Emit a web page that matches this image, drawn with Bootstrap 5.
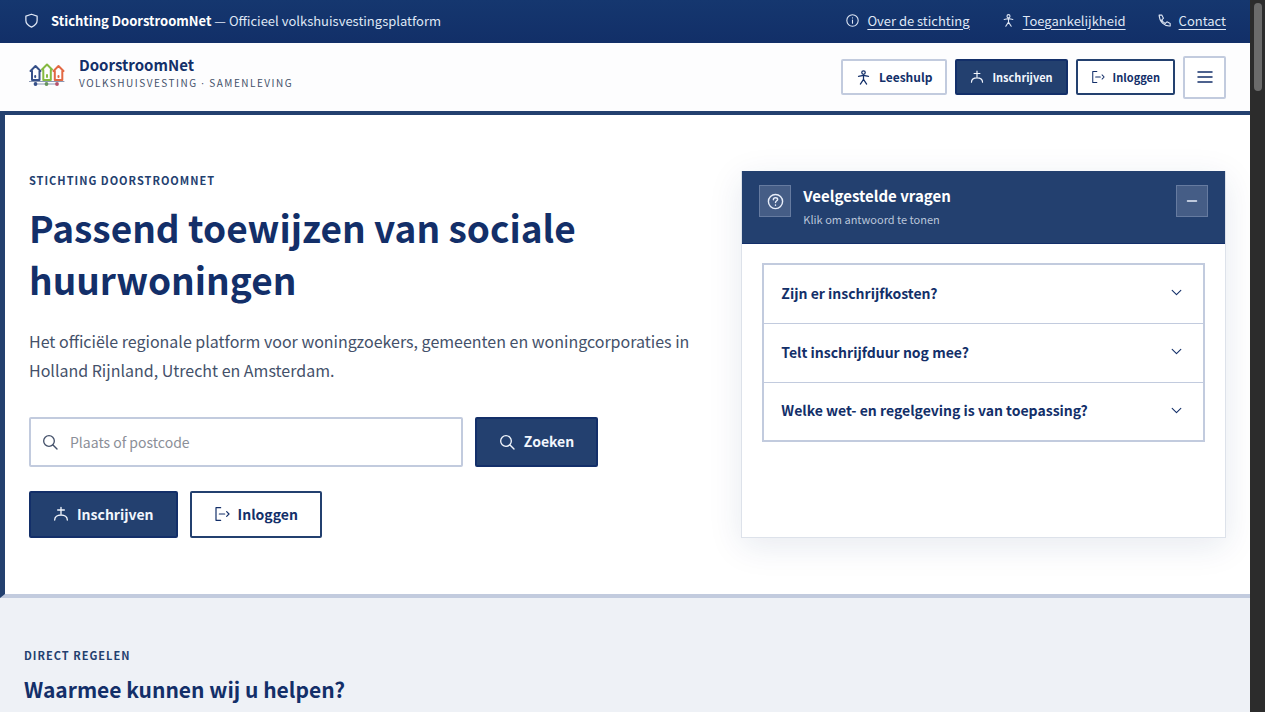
<!DOCTYPE html>
<html lang="nl">
<head>
<meta charset="utf-8">
<meta name="viewport" content="width=device-width, initial-scale=1">
<title>Stichting DoorstroomNet</title>
<link href="https://cdn.jsdelivr.net/npm/bootstrap@5.3.0/dist/css/bootstrap.min.css" rel="stylesheet">
<style>
:root { --navy: #132f69; --blue: #23406f; --line: #c2cbde; --muted: #44516a; }
body { font-family: "Noto Sans CJK SC", "Open Sans", sans-serif; font-size: 14px; line-height: 20px; color: var(--muted); background: #eef1f6; }
svg { flex: none; fill: none; stroke: currentColor; stroke-width: 2; stroke-linecap: round; stroke-linejoin: round; }
.shell { min-width: 0; }
.scroll-rail { width: 15px; height: 100vh; background: #2c2c2c; padding: 3px 3px 0 4px; }
.scroll-thumb { height: 88px; border-radius: 4px; background: #6b6b6b; }

.topbar { background: linear-gradient(#15376f, #122f68); color: #dfe7f5; font-size: 13px; height: 43px; padding: 0 24px 2px; }
.topbar a { color: #dfe7f5; text-underline-offset: 3px; }
.topbar strong { color: #fff; }
.topbar-links { gap: 32px; }
.masthead { background: #fdfdfe; border-bottom: 4px solid var(--blue); height: 72px; padding: 0 24px 0 29px; }
.brand { margin-bottom: 4px; }
.brand-text { margin: 0 0 4px 14px; }
.brand-name { font-size: 15px; line-height: 20px; font-weight: 700; color: var(--navy); }
.brand-sub { font-size: 10px; line-height: 16px; letter-spacing: 1.5px; color: var(--muted); }
.brand-sub span { font-family: "Open Sans", sans-serif; }

.btn { --bs-btn-border-radius: 2px; --bs-btn-border-width: 2px; --bs-btn-font-weight: 600; display: inline-flex; align-items: center; justify-content: center; gap: 8px; white-space: nowrap; }
.btn-navy { --bs-btn-color: #f2f6fd; --bs-btn-bg: var(--blue); --bs-btn-border-color: var(--navy); --bs-btn-hover-color: #fff; --bs-btn-hover-bg: var(--navy); }
.btn-line { --bs-btn-color: var(--navy); --bs-btn-bg: #fff; --bs-btn-border-color: var(--blue); --bs-btn-hover-color: #fff; --bs-btn-hover-bg: var(--blue); }
.btn-soft { --bs-btn-color: var(--navy); --bs-btn-bg: #fff; --bs-btn-border-color: var(--line); --bs-btn-hover-bg: #eef1f6; }
.btn-head { height: 36px; padding: 0 13px; font-size: 11px; line-height: 16px; }
.btn-help { font-size: 12px; }
.btn-menu { width: 43px; height: 43px; padding: 0; }
.btn-main { height: 47px; padding: 0 22px 1px; font-size: 14px; }

.hero { background: #fff; border-left: 5px solid var(--blue); border-bottom: 4px solid var(--line); padding: 56px 24px; }
.hero-grid { display: grid; grid-template-columns: 11fr 8fr; gap: 46px; }
.eyebrow { font-size: 11px; line-height: 18px; font-weight: 700; letter-spacing: 1px; color: var(--blue); margin: 0; }
.hero h1 { font-size: 37px; line-height: 52px; font-weight: 700; color: var(--navy); margin: 12px 0 22px; }
.intro { font-size: 16px; line-height: 29px; margin: 0 0 32px; }
.search { max-width: 569px; gap: 12px; margin-bottom: 24px; }
.search-icon { left: 13px; top: 17px; color: #44516a; }
.search .form-control { height: 50px; border: 2px solid var(--line); border-radius: 2px; padding: 0 12px 1px 39px; font-size: 14px; }
.search .form-control::placeholder { color: #8b8f98; }
.search .btn { height: 50px; width: 123px; padding: 0 0 1px; gap: 9px; }

.faq { border: 1px solid #dde2ea; border-top: 0; box-shadow: 0 8px 32px rgba(19, 47, 105, .1); background: #fff; }
.faq-head { background: var(--blue); border-bottom: 1px solid var(--navy); color: #fff; padding: 14px 17px 12px; gap: 12px; }
.faq-head h2 { font-size: 15px; line-height: 22px; font-weight: 700; margin: 0; }
.faq-head p { font-size: 11px; line-height: 24px; color: #bac6da; margin: 0; }
.square { width: 32px; height: 32px; background: #455d86; border: 1px solid #667ba0; color: #e8eefa; padding: 0; display: flex; align-items: center; justify-content: center; }
.faq-list { border: 2px solid var(--line); margin: 19px 20px; }
.faq-item { width: 100%; height: 59px; border: 0; border-bottom: 1px solid var(--line); background: #fff; color: var(--navy); font-size: 14px; font-weight: 600; text-align: left; padding: 0 20px 3px 17px; }
.faq-item:last-child { border-bottom: 0; height: 57px; }
.help { padding: 48px 24px 0; height: 114px; }
.help h2 { font-size: 21px; line-height: 32px; font-weight: 700; color: var(--navy); margin: 9px 0 0; }
</style>
</head>
<body>
<svg class="d-none" aria-hidden="true">
  <symbol id="person" viewBox="0 0 24 24"><circle cx="12" cy="4" r="2.800"/><path d="M4 10c3 0 5-1.500 8-1.500s5 1.500 8 1.500M12 8.500v6.500M12 15l-5 7.500M12 15l5 7.500"/></symbol>
  <symbol id="enrol" viewBox="0 0 24 24"><path d="M12 2v10M7 6h10M2.500 21c0-4.500 4-7.500 9.500-7.500s9.500 3 9.500 7.500"/></symbol>
  <symbol id="login" viewBox="0 0 24 24"><g stroke-width="1.800"><path d="M10 2.500H3v19h7M8 12h8M19 8.500l3.500 3.500-3.500 3.500"/></g></symbol>
  <symbol id="search" viewBox="0 0 24 24"><circle cx="10.500" cy="10.500" r="8"/><path d="M16.500 16.500l6 6"/></symbol>
  <symbol id="chevron" viewBox="0 0 24 24"><path d="M4 8l8 8 8-8"/></symbol>
</svg>
<div class="d-flex vh-100 overflow-hidden">
<div class="shell flex-grow-1">
  <div class="topbar d-flex align-items-center justify-content-between">
    <div class="d-flex align-items-center">
      <svg width="15" height="15" viewBox="0 0 24 24"><path d="M12 2l9 3v7c0 5-3.500 8-9 10.500C6.500 20 3 17 3 12V5z"/></svg>
      <span class="ms-2 ps-1"><strong>Stichting DoorstroomNet</strong> — Officieel volkshuisvestingsplatform</span>
    </div>
    <nav class="topbar-links d-flex">
      <div class="d-flex align-items-center gap-2"><svg width="13" height="13" viewBox="0 0 24 24"><circle cx="12" cy="12" r="10.500"/><path d="M12 11v6M12 7v.200"/></svg><a href="#stichting">Over de stichting</a></div>
      <div class="d-flex align-items-center gap-2"><svg width="13" height="13"><use href="#person"/></svg><a href="#toegankelijkheid">Toegankelijkheid</a></div>
      <div class="d-flex align-items-center gap-2"><svg width="13" height="13" viewBox="0 0 24 24"><path d="M2 2h5l3 6-3 3c1.500 3 3.500 5 6.500 6.500l3-3 6 3V22c-11 1-20-8-20.500-20z"/></svg><a href="#contact">Contact</a></div>
    </nav>
  </div>
  <header class="masthead d-flex align-items-center justify-content-between">
    <div class="brand d-flex align-items-center">
      <svg width="36" height="24" viewBox="0 0 36 24">
        <g stroke-width="2"><path stroke="#354f88" d="M1.500 8l5-5 5 5M3 8v9h7.500V8M6.200 13v1"/><path stroke="#85b940" d="M13 6.500l5-5 5 5M14.300 7v10h7.500V7M18 12v2"/><path stroke="#e26843" d="M24.500 8l5-5 5 5M25.800 8v9h7.500V8M29.500 13v1"/></g>
        <path stroke="#8b98b4" stroke-width="1" d="M0 18.500h35M7 21h21"/>
        <g stroke="none"><circle cx="6.500" cy="21" r="1.900" fill="#354f88"/><circle cx="17.500" cy="21" r="1.900" fill="#65935d"/><circle cx="28" cy="21" r="1.900" fill="#b5506b"/></g>
      </svg>
      <div class="brand-text">
        <div class="brand-name">DoorstroomNet</div>
        <div class="brand-sub">VOLKSHUISVESTING <span>·</span> SAMENLEVING</div>
      </div>
    </div>
    <div class="d-flex align-items-center gap-2">
      <button type="button" class="btn btn-soft btn-head btn-help"><svg width="15" height="15"><use href="#person"/></svg>Leeshulp</button>
      <button type="button" class="btn btn-navy btn-head"><svg width="14" height="14"><use href="#enrol"/></svg>Inschrijven</button>
      <button type="button" class="btn btn-line btn-head"><svg width="14" height="14"><use href="#login"/></svg>Inloggen</button>
      <button type="button" class="btn btn-soft btn-menu" aria-label="Menu"><svg width="18" height="14" viewBox="0 0 18 14"><g stroke-width="1.500"><path d="M2 2h14M2 7h14M2 12h14"/></g></svg></button>
    </div>
  </header>
  <main>
    <section class="hero">
      <div class="hero-grid">
        <div>
          <p class="eyebrow">STICHTING DOORSTROOMNET</p>
          <h1>Passend toewijzen van sociale huurwoningen</h1>
          <p class="intro">Het officiële regionale platform voor woningzoekers, gemeenten en woningcorporaties in Holland Rijnland, Utrecht en Amsterdam.</p>
          <form class="search d-flex">
            <div class="position-relative flex-grow-1">
              <svg class="search-icon position-absolute" width="16" height="16"><use href="#search"/></svg>
              <input type="text" class="form-control" placeholder="Plaats of postcode" aria-label="Plaats of postcode">
            </div>
            <button type="button" class="btn btn-navy btn-main"><svg width="16" height="16"><use href="#search"/></svg>Zoeken</button>
          </form>
          <div class="d-flex">
            <button type="button" class="btn btn-navy btn-main me-2"><svg width="16" height="16"><use href="#enrol"/></svg>Inschrijven</button>
            <button type="button" class="btn btn-line btn-main ms-1"><svg width="16" height="16"><use href="#login"/></svg>Inloggen</button>
          </div>
        </div>
        <aside class="faq">
          <div class="faq-head d-flex align-items-start">
            <span class="square"><svg width="17" height="17" viewBox="0 0 24 24"><circle cx="12" cy="12" r="10"/><path d="M9 9.500c0-4 6-3.500 6-.500 0 2-3 2-3 4.500M12 17v.200"/></svg></span>
            <div class="flex-grow-1"><h2>Veelgestelde vragen</h2><p>Klik om antwoord te tonen</p></div>
            <button type="button" class="square" aria-label="Inklappen"><svg width="12" height="12" viewBox="0 0 24 24"><g stroke-width="3"><path d="M3 12h18"/></g></svg></button>
          </div>
          <div class="faq-list">
            <button type="button" class="faq-item d-flex align-items-center justify-content-between">Zijn er inschrijfkosten?<svg width="13" height="13"><use href="#chevron"/></svg></button>
            <button type="button" class="faq-item d-flex align-items-center justify-content-between">Telt inschrijfduur nog mee?<svg width="13" height="13"><use href="#chevron"/></svg></button>
            <button type="button" class="faq-item d-flex align-items-center justify-content-between">Welke wet- en regelgeving is van toepassing?<svg width="13" height="13"><use href="#chevron"/></svg></button>
          </div>
        </aside>
      </div>
    </section>
    <section class="help">
      <p class="eyebrow">DIRECT REGELEN</p>
      <h2>Waarmee kunnen wij u helpen?</h2>
    </section>
  </main>
</div>
<div class="scroll-rail flex-shrink-0" aria-hidden="true"><div class="scroll-thumb"></div></div>
</div>
<script src="https://cdn.jsdelivr.net/npm/bootstrap@5.3.0/dist/js/bootstrap.bundle.min.js"></script>
</body>
</html>
